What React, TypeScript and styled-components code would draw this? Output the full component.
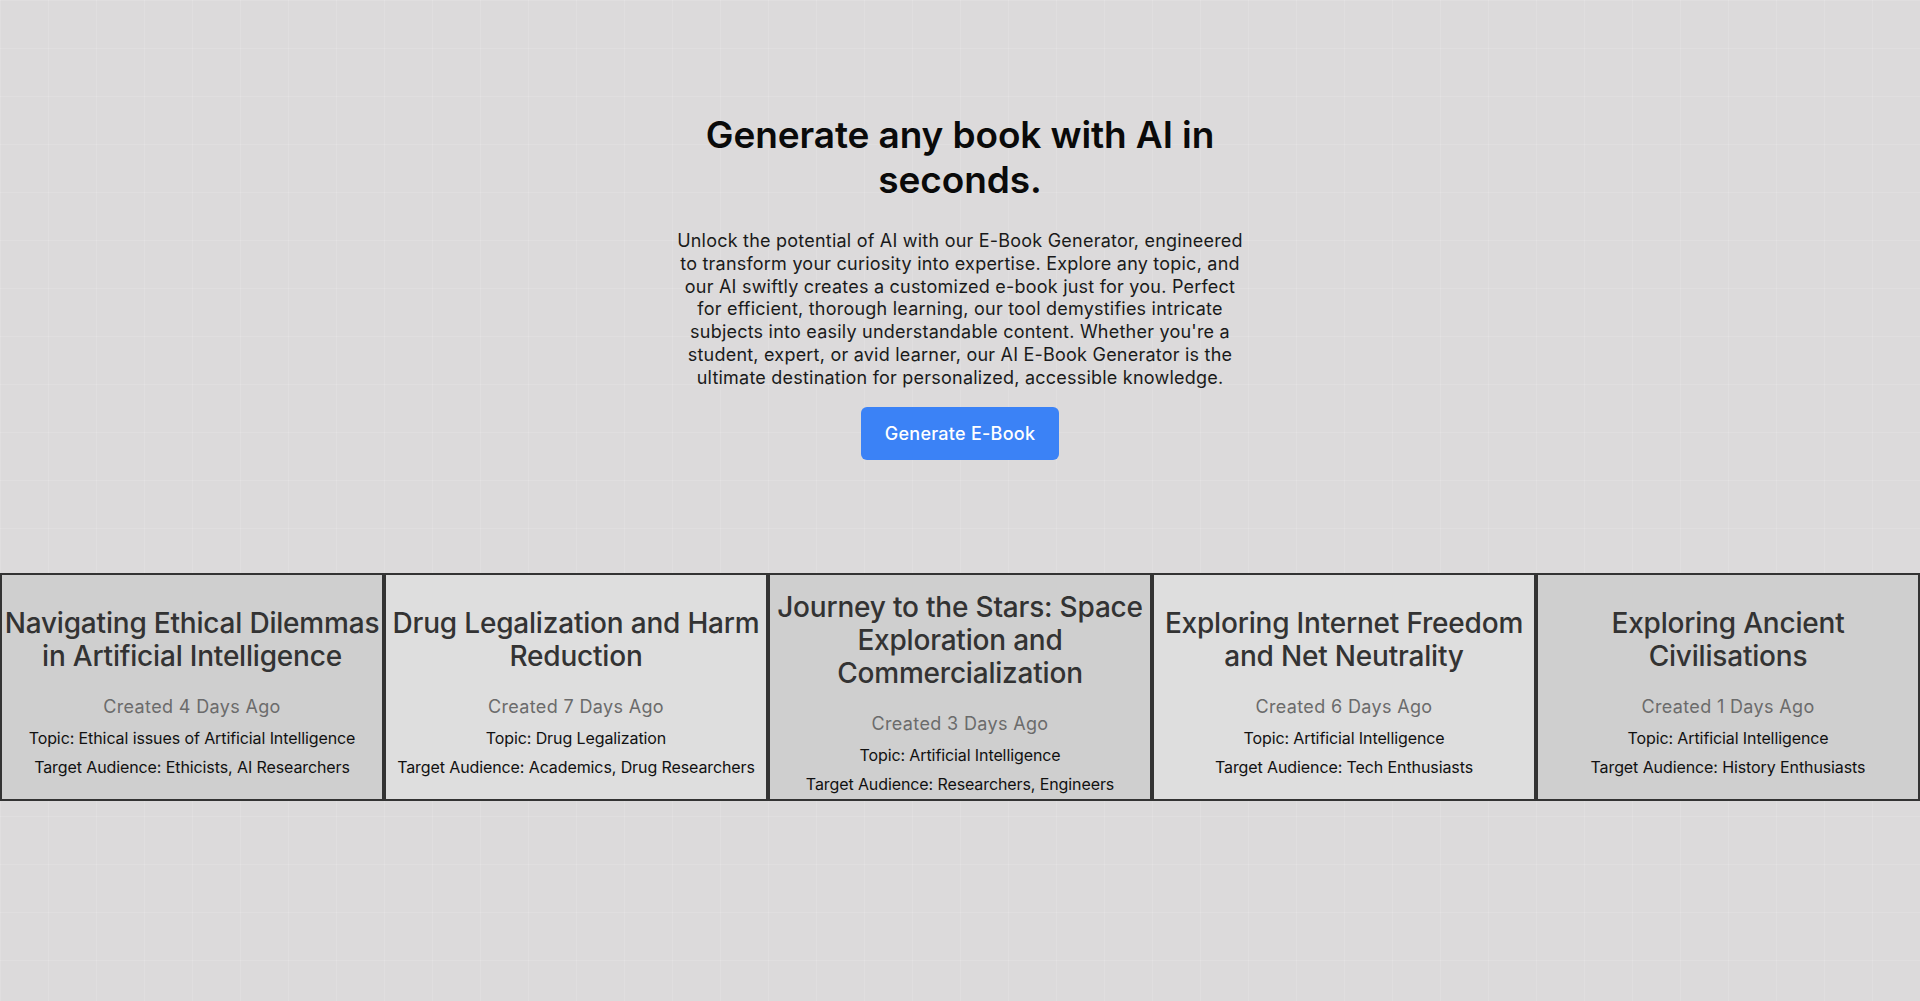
import React from "react";
import styled, { createGlobalStyle } from "styled-components";

const GlobalStyle = createGlobalStyle`
  html, body {
    margin: 0;
    padding: 0;
  }
  body {
    background: #dcdadb;
    font-family: Inter, "Noto Sans", "Liberation Sans", sans-serif;
    color: #111;
  }
`;

const Page = styled.main`
  min-height: 1001px;
  display: flex;
  flex-direction: column;
  align-items: stretch;
  background-color: #dcdadb;
  background-image:
    linear-gradient(rgba(255, 255, 255, 0.12) 1px, transparent 1px),
    linear-gradient(90deg, rgba(255, 255, 255, 0.12) 1px, transparent 1px);
  background-size: 48px 48px;
`;

const Hero = styled.section`
  display: flex;
  flex-direction: column;
  align-items: center;
  padding-top: 112px;
`;

const Title = styled.h1`
  margin: 0;
  max-width: 576px;
  font-size: 37px;
  line-height: 45px;
  font-weight: 600;
  text-align: center;
  color: #0a0a0a;
  letter-spacing: -0.1px;
`;

const Lead = styled.p`
  margin: 28px 0 0;
  max-width: 576px;
  font-size: 18px;
  line-height: 22.8px;
  text-align: center;
  color: #1a1a1a;
  letter-spacing: 0.22px;
`;

const PrimaryButton = styled.button`
  margin-top: 17px;
  padding: 12px 24px;
  border: none;
  border-radius: 6px;
  background: #3b82f6;
  color: #fff;
  font-family: inherit;
  font-size: 18px;
  line-height: 29px;
  font-weight: 500;
  letter-spacing: 0.25px;
  cursor: pointer;
`;

const BookRow = styled.section`
  margin-top: 113px;
  display: grid;
  grid-template-columns: repeat(5, 1fr);
`;

const BookCard = styled.article<{ $shade: "dark" | "light" }>`
  display: flex;
  flex-direction: column;
  justify-content: center;
  align-items: center;
  text-align: center;
  padding: 16px 0 3px;
  border: 2px solid #333;
  background: ${(p) => (p.$shade === "dark" ? "#cfcfcf" : "#dedede")};
`;

const BookTitle = styled.h2`
  margin: 0;
  font-size: 28px;
  line-height: 33px;
  font-weight: 500;
  color: #333;
  letter-spacing: -0.2px;
`;

const Created = styled.p`
  margin: 20px 0 0;
  font-size: 18px;
  line-height: 28px;
  color: #6b6b6b;
  letter-spacing: 0.35px;
`;

const Meta = styled.p`
  margin: 5px 0 0;
  font-size: 16px;
  line-height: 24px;
  color: #111;
  letter-spacing: -0.1px;
`;

type Book = {
  title: string;
  days: number;
  topic: string;
  audience: string;
};

const books: Book[] = [
  {
    title: "Navigating Ethical Dilemmas in Artificial Intelligence",
    days: 4,
    topic: "Ethical issues of Artificial Intelligence",
    audience: "Ethicists, AI Researchers",
  },
  {
    title: "Drug Legalization and Harm Reduction",
    days: 7,
    topic: "Drug Legalization",
    audience: "Academics, Drug Researchers",
  },
  {
    title: "Journey to the Stars: Space Exploration and Commercialization",
    days: 3,
    topic: "Artificial Intelligence",
    audience: "Researchers, Engineers",
  },
  {
    title: "Exploring Internet Freedom and Net Neutrality",
    days: 6,
    topic: "Artificial Intelligence",
    audience: "Tech Enthusiasts",
  },
  {
    title: "Exploring Ancient Civilisations",
    days: 1,
    topic: "Artificial Intelligence",
    audience: "History Enthusiasts",
  },
];

const App = () => {
  return (
    <>
      <GlobalStyle />
      <Page>
        <Hero>
          <Title>Generate any book with AI in seconds.</Title>
          <Lead>
            Unlock the potential of AI with our E-Book Generator, engineered to
            transform your curiosity into expertise. Explore any topic, and our
            AI swiftly creates a customized e-book just for you. Perfect for
            efficient, thorough learning, our tool demystifies intricate
            subjects into easily understandable content. Whether you're a
            student, expert, or avid learner, our AI E-Book Generator is the
            ultimate destination for personalized, accessible knowledge.
          </Lead>
          <PrimaryButton>Generate E-Book</PrimaryButton>
        </Hero>
        <BookRow>
          {books.map((book, i) => (
            <BookCard key={book.title} $shade={i % 2 === 0 ? "dark" : "light"}>
              <BookTitle>{book.title}</BookTitle>
              <Created>{`Created ${book.days} Days Ago`}</Created>
              <Meta>{`Topic: ${book.topic}`}</Meta>
              <Meta>{`Target Audience: ${book.audience}`}</Meta>
            </BookCard>
          ))}
        </BookRow>
      </Page>
    </>
  );
};

export default App;
